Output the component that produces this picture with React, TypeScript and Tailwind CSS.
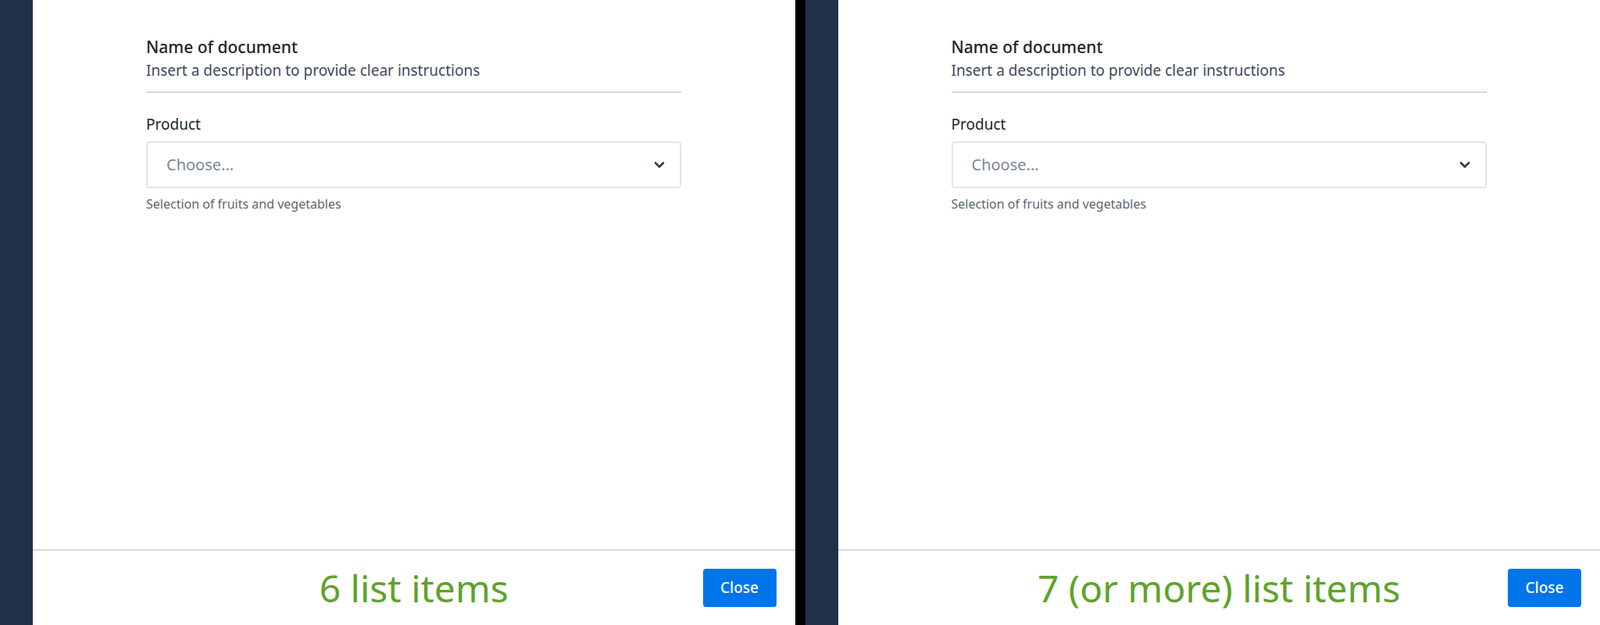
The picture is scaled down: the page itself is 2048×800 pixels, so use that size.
function Panel({ label }: { label: string }) {
  return (
    <div className="flex-1 bg-white flex flex-col h-full">
      <div className="flex-1 pl-[145px] pt-[46px]">
        <div className="w-[685px]">
          <div className="text-[21px] font-medium text-[#212529] leading-[28px]">Name of document</div>
          <div className="text-[19px] text-[#3d4a5c] leading-[28px] mt-[2px]">Insert a description to provide clear instructions</div>
          <div className="h-[2px] bg-[#d5d8dc] mt-[13px]" />
          <div className="text-[19px] text-[#212529] mt-[27px] leading-[26px]">Product</div>
          <div className="mt-[9px] h-[60px] border-2 border-[#e3e5e8] rounded-[4px] flex items-center justify-between pl-[24px] pr-[18px]">
            <span className="text-[20px] text-[#7b8794]">Choose...</span>
            <svg width="16" height="16" viewBox="0 0 16 16" fill="none" stroke="#2c3e55" strokeWidth="2.6" strokeLinecap="round" strokeLinejoin="round">
              <path d="M3 5.5l5 5 5-5" />
            </svg>
          </div>
          <div className="text-[16px] text-[#5c6672] mt-[8px]">Selection of fruits and vegetables</div>
        </div>
      </div>
      <div className="h-[97px] border-t-2 border-[#d8d8d8] grid grid-cols-[1fr_auto_1fr] items-center">
        <div />
        <div className="text-[48px] text-[#5ea32a] leading-none">{label}</div>
        <div className="flex justify-end pr-[24px]">
          <button className="bg-[#0075ea] text-white text-[19px] font-medium rounded-[4px] w-[94px] h-[49px]">Close</button>
        </div>
      </div>
    </div>
  );
}

export default function App() {
  return (
    <div className="w-[2048px] h-[800px] flex bg-[#21314a] font-['Roboto',sans-serif] overflow-hidden">
      <div className="w-[42px]" />
      <Panel label="6 list items" />
      <div className="w-[13px] bg-black" />
      <div className="w-[42px]" />
      <Panel label="7 (or more) list items" />
    </div>
  );
}
